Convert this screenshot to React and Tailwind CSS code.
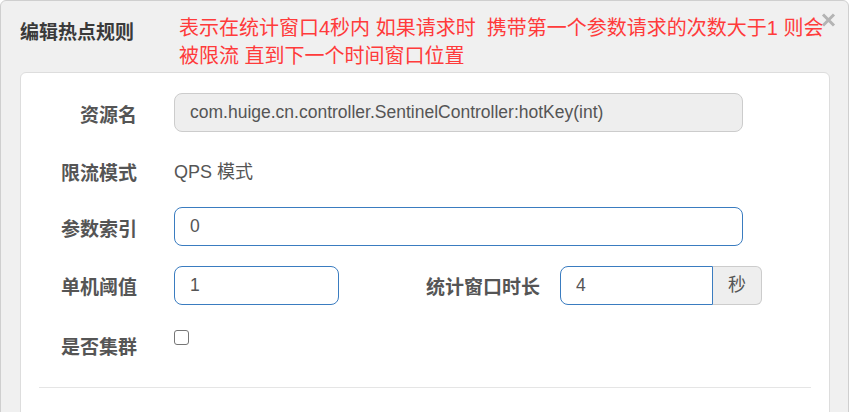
import { useState } from 'react';

const font = { fontFamily: '"Liberation Sans", "Noto Sans CJK SC", sans-serif' };

function Label({ children, className = '' }) {
  return (
    <div className={`shrink-0 text-right text-[19px] font-bold leading-[27px] text-[#555555] ${className}`}>
      {children}
    </div>
  );
}

export default function App() {
  const [paramIdx, setParamIdx] = useState('0');
  const [count, setCount] = useState('1');
  const [duration, setDuration] = useState('4');
  const [cluster, setCluster] = useState(false);

  return (
    <div className="relative h-[412px] w-[851px] overflow-hidden bg-white" style={font}>
      <div className="h-[440px] w-[849px] rounded-md border border-[#cfcfcf] bg-[#f0f0f0]">
        {/* Header */}
        <div className="relative flex h-[71px] items-start pl-[19px]">
          <div className="mt-[18px] w-[159px] shrink-0 text-[19px] font-bold leading-[27px] text-[#3a3a3a]">
            编辑热点规则
          </div>
          <div className="mt-[14px] w-[660px] text-[20px] leading-[27.5px] text-[#ff3b3b]">
            表示在统计窗口4秒内 如果请求时&nbsp; 携带第一个参数请求的次数大于1 则会被限流 直到下一个时间窗口位置
          </div>
          <button className="absolute right-[12px] top-[11px] flex h-[15px] w-[15px] items-center justify-center">
            <svg width="15" height="14" viewBox="0 0 15 14">
              <path d="M2 1.5 L13 12.5 M13 1.5 L2 12.5" stroke="#b4b4b4" strokeWidth="3" />
            </svg>
          </button>
        </div>

        {/* Body card */}
        <div className="ml-[19px] mr-[18px] h-[400px] rounded-md border border-[#dddddd] bg-white pt-[20px]">
          {/* 资源名 */}
          <div className="flex h-[39px]">
            <Label className="w-[116px] pt-[9px]">资源名</Label>
            <div className="ml-[37px] flex h-[39px] w-[569px] items-center rounded-lg border border-[#cccccc] bg-[#eeeeee] px-[15px] text-[17.5px] text-[#555555]">
              com.huige.cn.controller.SentinelController:hotKey(int)
            </div>
          </div>

          {/* 限流模式 */}
          <div className="mt-[19px] flex h-[39px]">
            <Label className="w-[116px] pt-[9px]">限流模式</Label>
            <div className="ml-[37px] pt-[8px] text-[18px] leading-[27px] text-[#555555]">QPS 模式</div>
          </div>

          {/* 参数索引 */}
          <div className="mt-[17px] flex h-[39px]">
            <Label className="w-[116px] pt-[9px]">参数索引</Label>
            <input
              value={paramIdx}
              onChange={(e) => setParamIdx(e.target.value)}
              className="ml-[37px] h-[39px] w-[569px] rounded-lg border border-[#3a7cc0] px-[15px] text-[17.5px] text-[#555555] outline-none"
            />
          </div>

          {/* 单机阈值 / 统计窗口时长 */}
          <div className="mt-[20px] flex h-[39px]">
            <Label className="w-[116px] pt-[8px]">单机阈值</Label>
            <input
              value={count}
              onChange={(e) => setCount(e.target.value)}
              className="ml-[37px] h-[39px] w-[165px] rounded-lg border border-[#3a7cc0] px-[15px] text-[17.5px] text-[#555555] outline-none"
            />
            <Label className="w-[201px] pt-[8px]">统计窗口时长</Label>
            <div className="ml-[20px] flex h-[39px]">
              <input
                value={duration}
                onChange={(e) => setDuration(e.target.value)}
                className="h-[39px] w-[153px] rounded-l-lg border border-[#3a7cc0] px-[15px] text-[17.5px] text-[#555555] outline-none"
              />
              <div className="flex h-[39px] w-[49px] items-center justify-center rounded-r-md border border-l-0 border-[#cccccc] bg-[#eeeeee] text-[18px] text-[#555555]">
                秒
              </div>
            </div>
          </div>

          {/* 是否集群 */}
          <div className="mt-[21px] flex h-[40px]">
            <Label className="w-[116px] pt-[8px]">是否集群</Label>
            <button
              onClick={() => setCluster(!cluster)}
              className="ml-[37px] mt-[4px] h-[15px] w-[15px] rounded-[3px] border border-[#767676] bg-white"
            >
              {cluster ? <span className="block h-full w-full bg-[#3a7cc0]" /> : null}
            </button>
          </div>

          <div className="mx-[18px] mt-[21px] h-px bg-[#e5e5e5]" />
        </div>
      </div>
    </div>
  );
}
